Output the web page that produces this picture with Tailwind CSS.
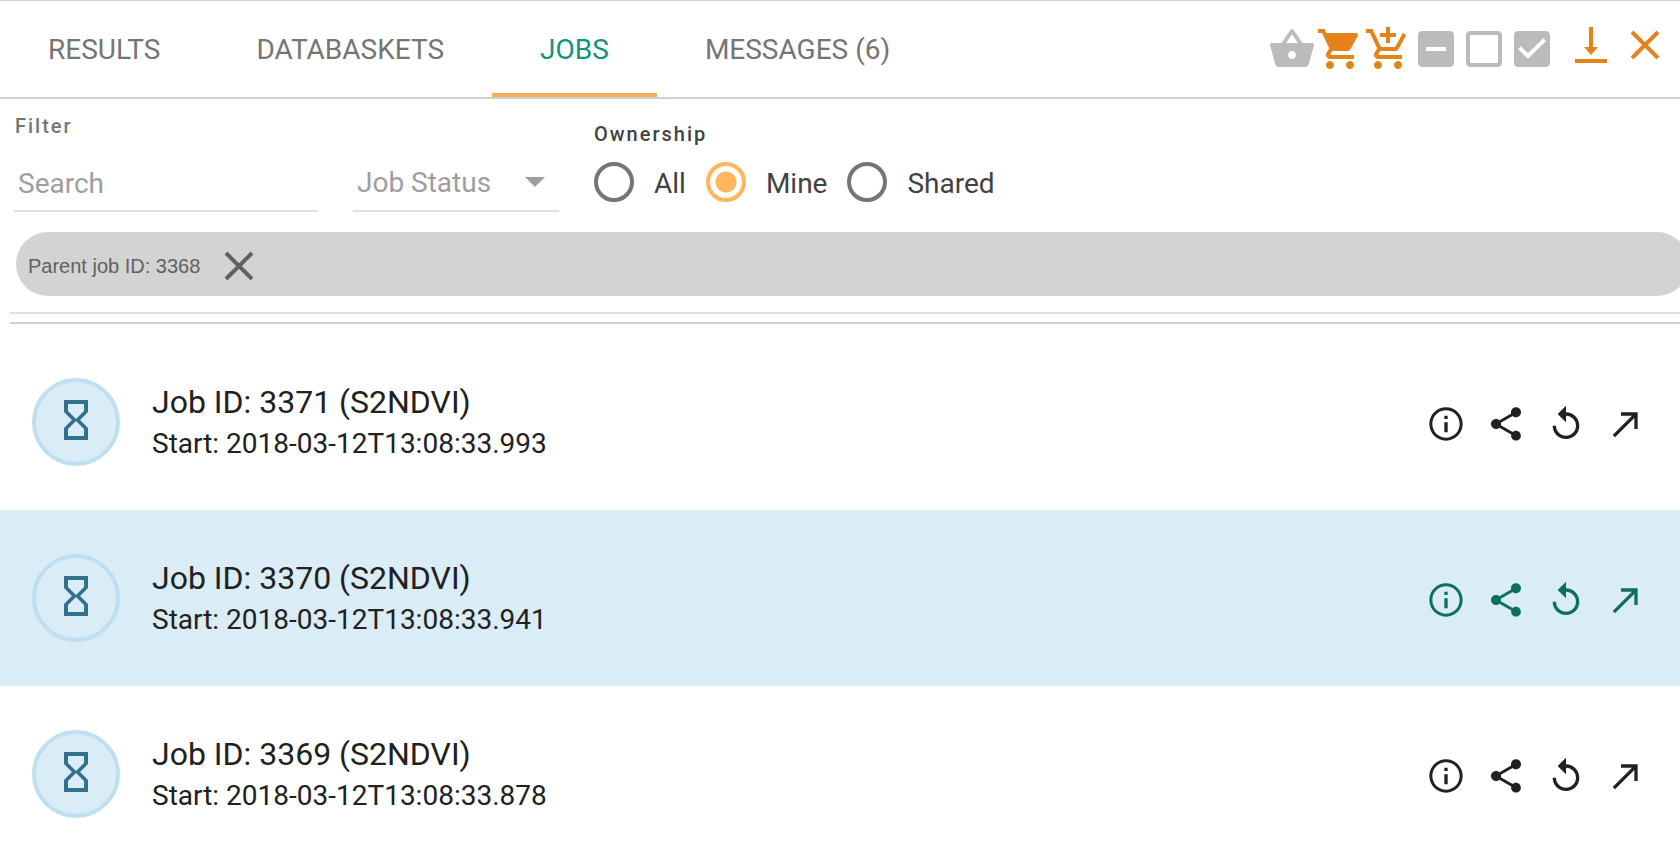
<!DOCTYPE html>
<html lang="en">
<head>
<meta charset="utf-8">
<title>Jobs</title>
<script src="https://cdn.jsdelivr.net/npm/@tailwindcss/browser@4"></script>
</head>
<body class="min-h-screen overflow-x-hidden bg-white font-[Roboto,sans-serif] text-[#212121]">
<svg class="hidden" aria-hidden="true">
  <symbol id="hourglass" viewBox="0 0 24 24"><path d="M6 2v6h.01L6 8.01 10 12l-4 4 .01.01H6V22h12v-5.99h-.01L18 16l-4-4 4-3.99-.01-.01H18V2H6zm10 14.5V20H8v-3.500l4-4 4 4zm-4-5l-4-4V4h8v3.500l-4 4z"/></symbol>
  <symbol id="info" viewBox="0 0 24 24"><path d="M11 17h2v-6h-2v6zm1-15C6.480 2 2 6.480 2 12s4.480 10 10 10 10-4.480 10-10S17.520 2 12 2zm0 18.200c-4.530 0-8.200-3.670-8.200-8.200S7.470 3.800 12 3.800s8.200 3.670 8.200 8.200-3.670 8.200-8.200 8.200zM11 9h2V7h-2v2z"/></symbol>
  <symbol id="share" viewBox="0 0 24 24"><path d="M18 16.080c-.76 0-1.440.3-1.960.77L8.910 12.700c.05-.23.09-.46.09-.7s-.04-.47-.09-.7l7.050-4.110c.54.5 1.250.81 2.040.81 1.660 0 3-1.340 3-3s-1.340-3-3-3-3 1.340-3 3c0 .24.04.47.09.7L8.040 9.810C7.500 9.310 6.790 9 6 9c-1.660 0-3 1.340-3 3s1.340 3 3 3c.79 0 1.500-.31 2.040-.81l7.120 4.160c-.05.21-.08.43-.08.65 0 1.610 1.310 2.920 2.920 2.920s2.920-1.310 2.920-2.920-1.310-2.920-2.920-2.920z"/></symbol>
  <symbol id="replay" viewBox="0 0 24 24"><path d="M12 5V1L7 6l5 5V7c3.310 0 6 2.690 6 6s-2.690 6-6 6-6-2.690-6-6H4c0 4.420 3.580 8 8 8s8-3.580 8-8-3.580-8-8-8z"/></symbol>
  <symbol id="open" viewBox="0 0 24 24"><path d="M9 5v2h6.590L4 18.590 5.410 20 17 8.410V15h2V5z"/></symbol>
</svg>

<header class="flex items-stretch justify-between border-t border-b-2 border-t-[#d0d0d0] border-b-[#d0d0d0] text-[28px] leading-8 text-[#757575]">
  <nav class="flex">
    <a href="#results" class="border-b-4 border-transparent px-12 pt-[33px] pb-[27px]">RESULTS</a>
    <a href="#databaskets" class="border-b-4 border-transparent px-12 pt-[33px] pb-[27px]">DATABASKETS</a>
    <a href="#jobs" aria-current="page" class="border-b-4 border-[#f4ae54] px-12 pt-[33px] pb-[27px] text-[#12937c]">JOBS</a>
    <a href="#messages" class="border-b-4 border-transparent px-12 pt-[33px] pb-[27px]">MESSAGES (6)</a>
  </nav>
  <div class="flex items-center pr-[15px] text-[#e5831a]">
    <button aria-label="Basket" class="text-[#bbb]"><svg class="size-12 fill-current" viewBox="0 0 24 24"><path d="M17.210 9l-4.380-6.560c-.19-.28-.51-.42-.83-.42-.32 0-.64.14-.83.43L6.790 9H2c-.55 0-1 .45-1 1 0 .09.01.18.04.27l2.540 9.270c.23.84 1 1.460 1.920 1.460h13c.92 0 1.690-.62 1.930-1.460l2.540-9.270L23 10c0-.55-.45-1-1-1h-4.790zM9 9l3-4.400L15 9H9zm3 8c-1.100 0-2-.9-2-2s.9-2 2-2 2 .9 2 2-.9 2-2 2z"/></svg></button>
    <button aria-label="Cart"><svg class="size-12 fill-current" viewBox="0 0 24 24"><path d="M7 18c-1.100 0-1.990.9-1.990 2S5.900 22 7 22s2-.9 2-2-.9-2-2-2zM1 2v2h2l3.600 7.590-1.350 2.450c-.16.28-.25.61-.25.96 0 1.100.9 2 2 2h12v-2H7.420c-.14 0-.25-.11-.25-.25l.03-.12.9-1.630h7.450c.75 0 1.410-.41 1.750-1.030l3.580-6.490c.08-.14.12-.31.12-.48 0-.55-.45-1-1-1H5.210l-.94-2H1zm16 16c-1.100 0-1.990.9-1.990 2s.89 2 1.990 2 2-.9 2-2-.9-2-2-2z"/></svg></button>
    <button aria-label="Add to cart"><svg class="size-12 fill-current" viewBox="0 0 24 24"><path d="M11 9h2V6h3V4h-3V1h-2v3H8v2h3v3zm-4 9c-1.100 0-1.990.9-1.990 2S5.900 22 7 22s2-.9 2-2-.9-2-2-2zm10 0c-1.100 0-1.990.9-1.990 2s.89 2 1.990 2 2-.9 2-2-.9-2-2-2zm-9.830-3.250l.03-.12.9-1.630h7.450c.75 0 1.410-.41 1.750-1.030l3.860-7.010L19.420 4h-.01l-1.100 2-2.760 5H8.530l-.13-.27L6.160 6l-.95-2-.94-2H1v2h2l3.600 7.590-1.350 2.450c-.16.28-.25.61-.25.96 0 1.100.9 2 2 2h12v-2H7.420c-.13 0-.25-.11-.25-.25z"/></svg></button>
    <button aria-label="Invert selection" class="text-[#bbb]"><svg class="size-12 fill-current" viewBox="0 0 24 24"><path d="M19 3H5c-1.100 0-2 .9-2 2v14c0 1.100.9 2 2 2h14c1.100 0 2-.9 2-2V5c0-1.100-.9-2-2-2zm-2 10H7v-2h10v2z"/></svg></button>
    <button aria-label="Clear selection" class="text-[#bbb]"><svg class="size-12 fill-current" viewBox="0 0 24 24"><path d="M19 5v14H5V5h14m0-2H5c-1.100 0-2 .9-2 2v14c0 1.100.9 2 2 2h14c1.100 0 2-.9 2-2V5c0-1.100-.9-2-2-2z"/></svg></button>
    <button aria-label="Select all" class="text-[#bbb]"><svg class="size-12 fill-current" viewBox="0 0 24 24"><path d="M19 3H5c-1.110 0-2 .9-2 2v14c0 1.100.89 2 2 2h14c1.110 0 2-.9 2-2V5c0-1.100-.89-2-2-2zm-9 14l-5-5 1.410-1.410L10 14.170l7.590-7.590L19 8l-9 9z"/></svg></button>
    <button aria-label="Download" class="ml-[19px] pb-2"><svg class="h-9 w-8 fill-current" viewBox="0 0 32 36"><path d="M14 0h4v20h5l-7 8-7-8h5zM0 32h32v4H0z"/></svg></button>
    <button aria-label="Close" class="ml-[18px] pb-2"><svg class="size-10 fill-none stroke-current" viewBox="0 0 40 40"><path stroke-width="4" d="M7 7l26 26M33 7L7 33"/></svg></button>
  </div>
</header>

<main>
  <form class="flex items-start text-[28px] leading-8">
    <div class="ml-[14px] w-[304px] pt-[15px]">
      <label for="search" class="block pl-px text-xl leading-6 font-medium tracking-widest text-[#757575]">Filter</label>
      <input id="search" type="text" placeholder="Search" class="mt-5 block h-[54px] w-full border-b-2 border-[#e0e0e0] pb-0.5 pl-1 outline-none placeholder:text-[#9e9e9e]">
    </div>
    <div class="relative mt-[59px] ml-[35px] w-[206px]">
      <select aria-label="Job Status" class="block h-[54px] w-full appearance-none border-b-2 border-[#e0e0e0] pb-0.5 pl-1 text-[#9e9e9e] outline-none"><option>Job Status</option></select>
      <svg class="pointer-events-none absolute top-0 right-0 size-12 fill-[#9e9e9e]" viewBox="0 0 24 24"><path d="M7 9.500l5 5 5-5z"/></svg>
    </div>
    <fieldset class="ml-[35px] pt-[23px] text-[#424242]">
      <legend class="contents"><span class="block text-xl leading-6 font-medium tracking-widest">Ownership</span></legend>
      <div class="mt-4 flex gap-5">
        <label class="flex items-center gap-5"><input type="radio" name="owner" class="size-10 appearance-none rounded-full border-4 border-[#757575]"><span class="pt-1">All</span></label>
        <label class="flex items-center gap-5"><input type="radio" name="owner" checked class="size-10 appearance-none rounded-full border-4 border-[#ffb65c] bg-[radial-gradient(circle,#ffb65c_10px,transparent_11px)]"><span class="pt-1">Mine</span></label>
        <label class="flex items-center gap-5"><input type="radio" name="owner" class="size-10 appearance-none rounded-full border-4 border-[#757575]"><span class="pt-1">Shared</span></label>
      </div>
    </fieldset>
  </form>

  <div class="mt-5 -mr-[9px] ml-4 flex h-16 items-center gap-[23px] rounded-full bg-[#d3d3d3] pl-3 font-['Liberation_Sans',sans-serif] text-xl text-[#616161]">
    <span class="pt-1">Parent job ID: 3368</span>
    <button aria-label="Remove filter"><svg class="size-8 fill-none stroke-[#616161]" viewBox="0 0 32 32"><path stroke-width="4" d="M3 5l26 26M29 5L3 31"/></svg></button>
  </div>
  <div class="mt-4 ml-[10px] h-3 border-y-2 border-t-[#e0e0e0] border-b-[#d0d0d0]"></div>

  <ul class="mt-[10px]">
    <li class="flex h-44 items-center pr-[34px] pl-8">
      <div class="flex size-22 items-center justify-center rounded-full border-4 border-[#bddff0] bg-[#daecf6] pb-1"><svg class="size-12 fill-[#31708f]"><use href="#hourglass"/></svg></div>
      <div class="ml-8 flex-1 pt-0.5">
        <h2 class="text-[32px] leading-[42px]">Job ID: 3371 (S2NDVI)</h2>
        <p class="text-[28px] leading-[42px]">Start: 2018-03-12T13:08:33.993</p>
      </div>
      <div class="flex gap-5 pt-1">
        <button aria-label="Info"><svg class="size-10 fill-current"><use href="#info"/></svg></button>
        <button aria-label="Share"><svg class="size-10 fill-current"><use href="#share"/></svg></button>
        <button aria-label="Restart"><svg class="size-10 fill-current"><use href="#replay"/></svg></button>
        <button aria-label="Open"><svg class="size-10 fill-current"><use href="#open"/></svg></button>
      </div>
    </li>
    <li class="flex h-44 items-center bg-[#daecf6] pr-[34px] pl-8">
      <div class="flex size-22 items-center justify-center rounded-full border-4 border-[#bddff0] bg-[#daecf6] pb-1"><svg class="size-12 fill-[#31708f]"><use href="#hourglass"/></svg></div>
      <div class="ml-8 flex-1 pt-0.5">
        <h2 class="text-[32px] leading-[42px]">Job ID: 3370 (S2NDVI)</h2>
        <p class="text-[28px] leading-[42px]">Start: 2018-03-12T13:08:33.941</p>
      </div>
      <div class="flex gap-5 pt-1 text-[#0c705f]">
        <button aria-label="Info"><svg class="size-10 fill-current"><use href="#info"/></svg></button>
        <button aria-label="Share"><svg class="size-10 fill-current"><use href="#share"/></svg></button>
        <button aria-label="Restart"><svg class="size-10 fill-current"><use href="#replay"/></svg></button>
        <button aria-label="Open"><svg class="size-10 fill-current"><use href="#open"/></svg></button>
      </div>
    </li>
    <li class="flex h-44 items-center pr-[34px] pl-8">
      <div class="flex size-22 items-center justify-center rounded-full border-4 border-[#bddff0] bg-[#daecf6] pb-1"><svg class="size-12 fill-[#31708f]"><use href="#hourglass"/></svg></div>
      <div class="ml-8 flex-1 pt-0.5">
        <h2 class="text-[32px] leading-[42px]">Job ID: 3369 (S2NDVI)</h2>
        <p class="text-[28px] leading-[42px]">Start: 2018-03-12T13:08:33.878</p>
      </div>
      <div class="flex gap-5 pt-1">
        <button aria-label="Info"><svg class="size-10 fill-current"><use href="#info"/></svg></button>
        <button aria-label="Share"><svg class="size-10 fill-current"><use href="#share"/></svg></button>
        <button aria-label="Restart"><svg class="size-10 fill-current"><use href="#replay"/></svg></button>
        <button aria-label="Open"><svg class="size-10 fill-current"><use href="#open"/></svg></button>
      </div>
    </li>
  </ul>
</main>
</body>
</html>
